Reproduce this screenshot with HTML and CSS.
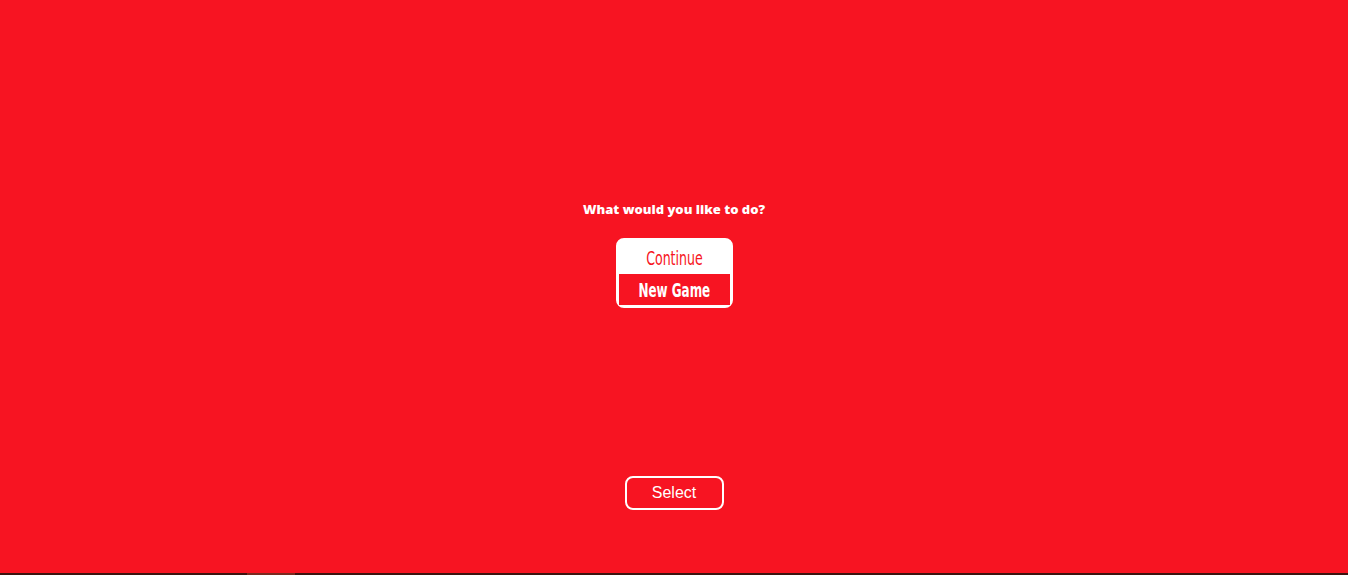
FILE: index.html
```html
<!DOCTYPE html>
<html lang="en">
<head>
<meta charset="utf-8">
<title>Menu</title>
<link rel="stylesheet" href="styles.css">
</head>
<body>
<div class="screen">
  <h1 class="prompt">What would you like to do?</h1>
  <ul class="menu">
    <li class="menu-item"><span class="label">Continue</span></li>
    <li class="menu-item is-active"><span class="label">New Game</span></li>
  </ul>
  <button class="select-btn" type="button">Select</button>
</div>
<div class="loader"><div class="loader-fill"></div></div>
</body>
</html>
```

FILE: styles.css
```css
html, body {
  margin: 0;
  padding: 0;
  background: #f71422;
  overflow: hidden;
}
.screen {
  height: 573px;
  box-sizing: border-box;
  padding: 201px 0 63px;
  display: flex;
  flex-direction: column;
  align-items: center;
}
.prompt {
  margin: 0;
  font-family: "Open Sans", sans-serif;
  font-weight: 800;
  font-size: 13px;
  line-height: 16px;
  color: #ffffff;
}
.menu {
  list-style: none;
  margin: 21px 0 0;
  padding: 1px;
  width: 111px;
  background: #ffffff;
  border: 2px solid #ffffff;
  border-radius: 8px;
}
.menu-item {
  height: 33px;
  display: flex;
  align-items: center;
  justify-content: center;
  font-family: "DejaVu Sans Condensed", "DejaVu Sans", sans-serif;
  font-stretch: condensed;
  font-size: 20px;
  color: #f71422;
  background: #ffffff;
}
.label {
  display: inline-block;
  white-space: nowrap;
  transform: scaleX(0.7);
}
.menu-item.is-active {
  height: 31px;
  background: #f71422;
  color: #ffffff;
  font-weight: 700;
  font-size: 19px;
}
.select-btn {
  margin-top: auto;
  width: 99px;
  height: 34px;
  background: transparent;
  border: 2px solid #ffffff;
  border-radius: 8px;
  color: #ffffff;
  font-family: "Liberation Sans", Arial, sans-serif;
  font-size: 16px;
  padding: 0;
}
.loader {
  height: 2px;
  background: #3c1410;
}
.loader-fill {
  margin-left: 247px;
  width: 48px;
  height: 2px;
  background: #7a2a20;
}
```
